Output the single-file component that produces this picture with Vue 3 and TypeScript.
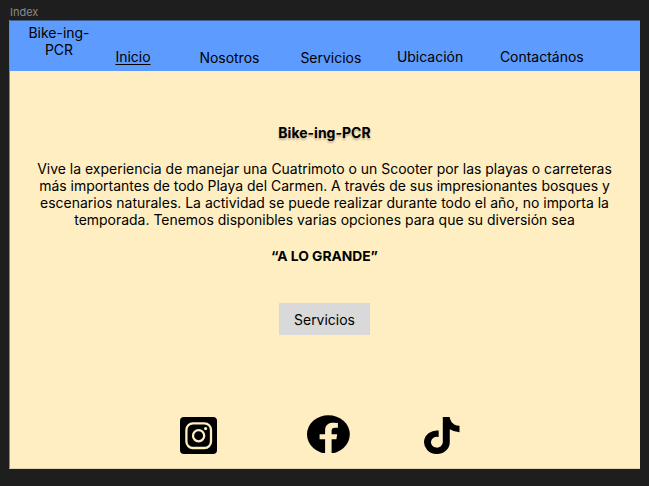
<script setup lang="ts">
interface NavLink {
  label: string
  key: string
  active?: boolean
}

const links: NavLink[] = [
  { label: 'Inicio', key: 'inicio', active: true },
  { label: 'Nosotros', key: 'nosotros' },
  { label: 'Servicios', key: 'servicios' },
  { label: 'Ubicación', key: 'ubicacion' },
  { label: 'Contactános', key: 'contactanos' },
]

const lines: string[] = [
  'Vive la experiencia de manejar una Cuatrimoto o un Scooter por las playas o carreteras',
  'más importantes de todo Playa del Carmen. A través de sus impresionantes bosques y',
  'escenarios naturales. La actividad se puede realizar durante todo el año, no importa la',
  'temporada. Tenemos disponibles varias opciones para que su diversión sea',
]
</script>

<template>
  <div class="canvas">
    <div class="frame-label">Index</div>
    <div class="frame">
      <header class="header">
        <div class="brand">Bike-ing-<br />PCR</div>
        <nav class="nav">
          <a v-for="l in links" :key="l.key" :class="['link', l.key, { active: l.active }]">{{ l.label }}</a>
        </nav>
      </header>
      <main class="main">
        <h1 class="title">Bike-ing-PCR</h1>
        <p class="text">
          <span v-for="line in lines" :key="line" class="line">{{ line }}</span>
        </p>
        <p class="slogan">“A LO GRANDE”</p>
        <button class="button">Servicios</button>
      </main>
      <footer class="social">
        <svg class="instagram" viewBox="0 0 37 37">
          <rect width="37" height="37" rx="4" />
          <g fill="none" stroke="#ffeec2" stroke-width="2.3">
            <rect x="6.4" y="6.4" width="24.6" height="24.6" rx="6.5" />
            <circle cx="18.6" cy="18.7" r="5.6" />
          </g>
          <circle cx="25.6" cy="11.6" r="1.6" fill="#ffeec2" />
        </svg>
        <svg class="facebook" viewBox="0 0 43 38">
          <ellipse cx="21.4" cy="19.4" rx="21.4" ry="19.2" />
          <path
            fill="#ffeec2"
            d="M18.1 39V24.2H12.6V19.3H18.1V15C18.1 10.3 21.2 7.7 26 7.7C28.2 7.7 30.9 8.1 30.9 8.1V12.7H28.2C25.5 12.7 24.6 14 24.6 15.7V19.3H30.2L29.4 24.2H24.6V39Z"
          />
        </svg>
        <svg class="tiktok" viewBox="0 0 448 512" preserveAspectRatio="none">
          <path d="M448 209.91a210.06 210.06 0 0 1-122.77-39.25V349.38A162.55 162.55 0 1 1 185 188.31V278.2a74.62 74.62 0 1 0 52.23 71.18V0h88a121.18 121.18 0 0 0 1.86 22.17A122.18 122.18 0 0 0 381 102.39a121.43 121.43 0 0 0 67 20.14z" />
        </svg>
      </footer>
    </div>
  </div>
</template>

<style>
body {
  background: #1e1e1e;
}
</style>

<style scoped>
.canvas {
  box-sizing: border-box;
  width: 649px;
  height: 486px;
  padding: 5px 9px 0 9px;
  overflow: hidden;
  background: #1e1e1e;
  font-family: Inter, sans-serif;
  font-size: 13.97px;
  line-height: 17px;
  color: #000;
}
.frame-label {
  height: 15px;
  padding-left: 1px;
  font-size: 11px;
  line-height: 15px;
  color: #8b8b8b;
}
.frame {
  box-sizing: border-box;
  display: flex;
  flex-direction: column;
  width: 631px;
  height: 449px;
  border-left: 1px solid #8f876f;
  border-bottom: 1px solid #e3d5aa;
  background: #ffeec2;
}
.header {
  box-sizing: border-box;
  display: flex;
  flex: none;
  height: 51px;
  border-top: 1px solid #3e5c8d;
  background: #5e9bff;
}
.brand {
  width: 62px;
  margin-left: 18px;
  padding-top: 3px;
  text-align: center;
  white-space: nowrap;
}
.nav {
  display: flex;
  padding: 28px 0 0 25.4px;
}
.link {
  flex: none;
  white-space: nowrap;
}
.inicio { width: 84px; margin-top: -1px; }
.nosotros { width: 101px; }
.servicios { width: 96.5px; }
.ubicacion { width: 103px; }
.ubicacion, .contactanos { margin-top: -0.6px; }
.active {
  text-decoration: underline;
  text-decoration-thickness: 1px;
  text-underline-offset: 2px;
}
.main {
  display: flex;
  flex: 1;
  flex-direction: column;
  align-items: center;
  padding-right: 1px;
}
.title {
  margin: 53px 0 0;
  font-size: 14px;
  font-weight: 700;
  line-height: 17px;
  text-shadow: 0 2px 2px rgba(0, 0, 0, 0.25);
}
.text {
  margin: 19px 0 0;
  text-align: center;
}
.line {
  display: block;
  white-space: nowrap;
}
.slogan {
  margin: 20px 0 0;
  font-size: 13.8px;
  font-weight: 700;
}
.button {
  width: 91px;
  height: 32px;
  margin: 38px 0 0;
  padding: 0;
  border: 0;
  border-radius: 0;
  background: #d9d9d9;
  color: #000;
  font: inherit;
}
.social {
  display: flex;
  flex: none;
  height: 53px;
  padding-left: 170px;
}
.instagram {
  width: 37px;
  height: 37px;
  margin-top: 2px;
}
.facebook {
  width: 43px;
  height: 38px;
  margin-left: 90px;
}
.tiktok {
  width: 35.5px;
  height: 37px;
  margin: 2px 0 0 74px;
}
</style>
